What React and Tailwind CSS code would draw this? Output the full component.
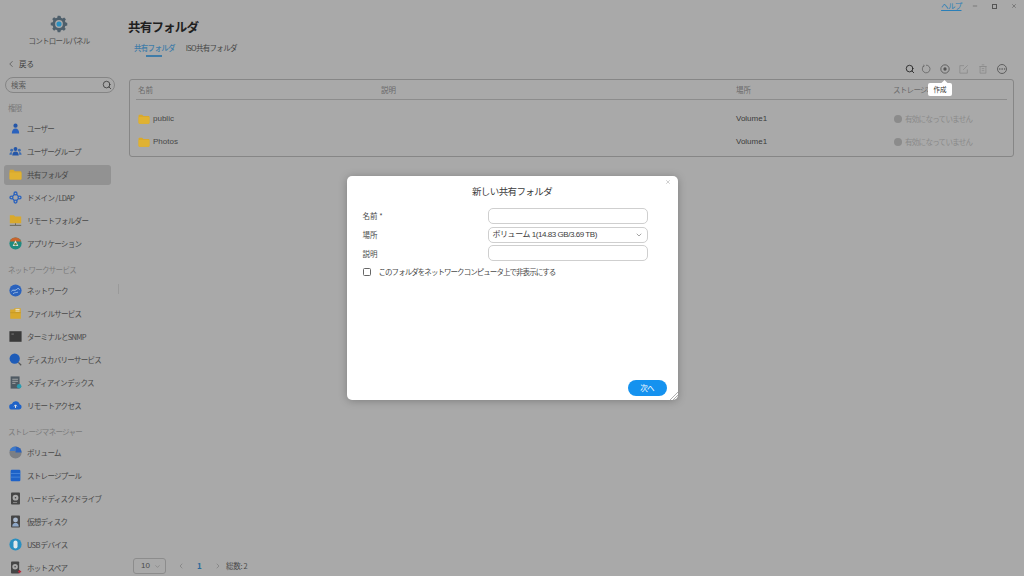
import React from "react";
import { Search, ChevronLeft, ChevronDown, ChevronRight, X, Minus, Ellipsis } from "lucide-react";

const Folder = ({ c = "#d9a92c", className = "" }) => (
  <svg viewBox="0 0 22 18" className={className}>
    <path d="M1 2.5A1.5 1.5 0 0 1 2.5 1h5L10 3.5h9.5A1.5 1.5 0 0 1 21 5V16a1.5 1.5 0 0 1-1.5 1.5h-17A1.5 1.5 0 0 1 1 16z" fill={c} />
    <path d="M1 5.5h20V16a1.5 1.5 0 0 1-1.5 1.5h-17A1.5 1.5 0 0 1 1 16z" fill="#e0b232" />
  </svg>
);

const S = ({ children }) => <svg viewBox="0 0 16 16" className="w-[13px] h-[13px]">{children}</svg>;

const icons = {
  user: <S><circle cx="8" cy="4.5" r="2.6" fill="#2456a8" /><path d="M3.5 14c0-4 1.8-6 4.5-6s4.5 2 4.5 6z" fill="#2a62bd" /></S>,
  group: <S><circle cx="8" cy="5" r="2.4" fill="#2456a8" /><circle cx="3.3" cy="6.5" r="1.8" fill="#3d6cb0" /><circle cx="12.7" cy="6.5" r="1.8" fill="#3d6cb0" /><path d="M4 13c0-3 1.5-5 4-5s4 2 4 5z" fill="#2456a8" /><path d="M0.5 12c0-2 1-3.5 3-3.5v3.5zM15.5 12c0-2-1-3.5-3-3.5v3.5z" fill="#3d6cb0" /></S>,
  domain: <S><g fill="none" stroke="#2a62bd" strokeWidth="1.6"><circle cx="8" cy="3" r="1.8" /><circle cx="8" cy="13" r="1.8" /><circle cx="3" cy="8" r="1.8" /><circle cx="13" cy="8" r="1.8" /><path d="M6.6 4.4 4.4 6.6M9.4 4.4l2.2 2.2M6.6 11.6 4.4 9.4M9.4 11.6l2.2-2.2" /></g></S>,
  remote: <S><path d="M1 1.5h5l1.5 1.5H15v8.5H1z" fill="#d9a92c" /><path d="M8 11.5v2M1 14h14" stroke="#5e5a48" strokeWidth="1" /></S>,
  app: <S><circle cx="8" cy="8" r="7.5" fill="#1f8a80" /><path d="M8 .5A7.5 7.5 0 0 1 15 5.5H1A7.5 7.5 0 0 1 8 .5z" fill="#c8642c" /><path d="M8 4 4.5 11h7z" fill="#ddd" /><circle cx="8" cy="9" r="1.5" fill="#5a8a3c" /></S>,
  network: <S><circle cx="8" cy="8" r="7.5" fill="#2a62bd" /><path d="M3 9c2-3 4 0 6-2s3-2 4 0" stroke="#a8c4e8" strokeWidth="1.2" fill="none" /><path d="M5 12c2-2 4-1 6-2" stroke="#a8c4e8" strokeWidth="1" fill="none" /></S>,
  file: <S><path d="M1.5 3h4L7 1.5h7.5v13h-13z" fill="#d9a92c" /><path d="M8 3h5M8 5h5" stroke="#eee" strokeWidth="1" /><path d="M1.5 7h13" stroke="#c39522" strokeWidth="1" /></S>,
  terminal: <S><rect x="0.5" y="1.5" width="15" height="13" fill="#3a3a3a" /><path d="M3 5h3" stroke="#888" strokeWidth="1" /></S>,
  discovery: <S><circle cx="7" cy="7" r="6.3" fill="#1e5cb8" /><path d="m11.5 11.5 3.5 3.5" stroke="#555" strokeWidth="1.6" /></S>,
  media: <S><rect x="2" y="0.5" width="11" height="15" fill="#4f5a63" /><path d="M4 4h7M4 6.5h7M4 9h4" stroke="#b5b5b5" strokeWidth="1" /><circle cx="12.5" cy="12.5" r="2.8" fill="#2a9bb0" /></S>,
  access: <S><path d="M4 13a3.5 3.5 0 0 1-.5-7A5 5 0 0 1 13 6.5 3.3 3.3 0 0 1 12.5 13z" fill="#1e62c8" /><path d="M8 11V7.5M6.3 9 8 7.2 9.7 9" stroke="#e8e8e8" strokeWidth="1.2" fill="none" /></S>,
  volume: <S><circle cx="8" cy="8" r="7.5" fill="#7c7f84" /><path d="M8 8V.5A7.5 7.5 0 0 1 15.5 8z" fill="#2a62bd" /><path d="M8 .5A7.5 7.5 0 0 0 .9 6H8z" fill="#3a78cc" /></S>,
  pool: <S><rect x="2" y="1" width="12" height="14" rx="1.5" fill="#1e62c8" /><path d="M2 5.5h12M2 10h12" stroke="#5a94e0" strokeWidth="0.8" /></S>,
  hdd: <S><rect x="2.5" y="0.5" width="11" height="15" rx="1" fill="#454545" /><circle cx="8" cy="7" r="3.6" fill="#a9a9a9" /><circle cx="8" cy="7" r="1" fill="#454545" /><path d="M5 13h5" stroke="#999" strokeWidth="1" /></S>,
  vdisk: <S><rect x="2.5" y="0.5" width="11" height="15" rx="1" fill="#454545" /><circle cx="8" cy="6" r="3" fill="#a9b8cc" /><path d="M4 14c0-3 2-4.5 4-4.5s4 1.5 4 4.5z" fill="#8fa8c8" /></S>,
  usb: <S><circle cx="8" cy="8" r="7.5" fill="#2a8fc0" /><rect x="5.5" y="3" width="5" height="10" rx="2.5" fill="#dfe8ec" /></S>,
  spare: <S><rect x="2.5" y="0.5" width="10" height="15" rx="1" fill="#454545" /><circle cx="7.5" cy="7" r="3.4" fill="#a9a9a9" /><circle cx="7.5" cy="7" r="1" fill="#454545" /><path d="M11 13h4M13 11v4" stroke="#b02a3a" strokeWidth="1.6" /></S>,
};

const sections = [
  { title: "権限", items: [["user", "ユーザー"], ["group", "ユーザーグループ"], ["folder", "共有フォルダ", true], ["domain", "ドメイン / LDAP"], ["remote", "リモートフォルダー"], ["app", "アプリケーション"]] },
  { title: "ネットワークサービス", items: [["network", "ネットワーク"], ["file", "ファイルサービス"], ["terminal", "ターミナルとSNMP"], ["discovery", "ディスカバリーサービス"], ["media", "メディアインデックス"], ["access", "リモートアクセス"]] },
  { title: "ストレージマネージャー", items: [["volume", "ボリューム"], ["pool", "ストレージプール"], ["hdd", "ハードディスクドライブ"], ["vdisk", "仮想ディスク"], ["usb", "USB デバイス"], ["spare", "ホットスペア"]] },
];

function Sidebar() {
  return (
    <aside className="w-[120px] shrink-0 flex flex-col">
      <div className="flex flex-col items-center pt-[15px] pr-[2px] h-[57px] shrink-0">
        <svg viewBox="0 0 24 24" className="w-[18px] h-[18px]">
          <path d="M12 1l2 .2.7 2.6 1.9.8 2.3-1.4 2.3 2.4-1.3 2.3.8 1.9 2.3.7v3.4l-2.6.7-.8 1.9 1.4 2.3-2.4 2.3-2.3-1.3-1.9.8-.7 2.3h-3.4l-.7-2.6-1.9-.8-2.3 1.4-2.3-2.4 1.3-2.3-.8-1.9L1 13.7v-3.4l2.6-.7.8-1.9L3 5.4l2.4-2.3 2.3 1.3 1.9-.8.7-2.6z" fill="#4e5f6b" />
          <circle cx="12" cy="12" r="5.2" fill="#a9a9a9" />
          <circle cx="12" cy="12" r="3.4" fill="#2a8fc0" />
        </svg>
        <div className="text-[7.5px] leading-[10px] mt-[3px] text-[#4e4e4e] whitespace-nowrap">コントロールパネル</div>
      </div>
      <div className="flex items-center h-[14px] shrink-0 pl-[6px] text-[7.5px] tracking-normal text-[#404040]">
        <ChevronLeft className="w-[10px] h-[10px] mr-[3px]" strokeWidth={1.5} />戻る
      </div>
      <div className="ml-[5px] mt-[6px] w-[110px] h-[16px] shrink-0 rounded-full border border-[#858585] flex items-center justify-between pl-[5px] pr-[2px] text-[7.5px] tracking-normal text-[#5a5a5a]">
        検索
        <Search className="w-[10px] h-[10px] text-[#2e2e2e]" strokeWidth={1.8} />
      </div>
      {sections.map((s) => (
        <div key={s.title} className="mt-[6px] shrink-0">
          <div className="h-[18px] flex items-center pl-[8px] text-[7.5px] text-[#7a7a7a] whitespace-nowrap">{s.title}</div>
          {s.items.map(([ic, label, active]) => (
            <div key={label} className={`flex items-center ml-[4px] w-[107px] pl-[5px] rounded-[3px] text-[7.5px] text-[#484848] whitespace-nowrap ${active ? "bg-[#929292] h-[20px] my-[1.5px]" : "h-[23px]"}`}>
              <span className="w-[17px] flex justify-start shrink-0 mr-[1px]">
                {ic === "folder" ? <Folder className="w-[13px] h-[11px]" /> : icons[ic]}
              </span>
              {label}
            </div>
          ))}
        </div>
      ))}
    </aside>
  );
}

function Row({ name }) {
  return (
    <div className="h-[23px] flex items-center text-[7.5px] text-[#3c3c3c]">
      <div className="w-[245px] flex items-center pl-[2px]">
        <Folder className="w-[12px] h-[10px] mr-[3px]" />
        <span className="font-['Liberation_Sans',sans-serif] text-[8px] tracking-normal text-[#474747]">{name}</span>
      </div>
      <div className="w-[355px]" />
      <div className="w-[157px] font-['Liberation_Sans',sans-serif] text-[8px] tracking-normal">Volume1</div>
      <div className="flex items-center text-[#8a8a8a] pl-[1px]">
        <span className="w-[8px] h-[8px] rounded-full bg-[#8b8b8b] mr-[3px]" />
        有効になっていません
      </div>
    </div>
  );
}

function Main() {
  return (
    <main className="flex-1 flex flex-col pl-[9px] pr-[10px] relative min-w-0">
      <div className="flex justify-end items-center h-[12px] text-[#4a4a4a] -mr-[3px]">
        <span className="text-[7.5px] text-[#2a7fb8] underline mr-[10px]">ヘルプ</span>
        <Minus className="w-[6px] h-[6px] mr-[14px]" />
        <span className="w-[5px] h-[5px] border border-[#555] mr-[14.5px]" />
        <X className="w-[6px] h-[6px]" />
      </div>
      <h1 className="text-[12.5px] leading-[16px] font-bold tracking-[-0.8px] text-[#1f1f1f] mt-[7px] -ml-[1px]">共有フォルダ</h1>
      <div className="flex text-[7.5px] mt-[6px] h-[20px] pl-[5px]">
        <div className="relative text-[#3f7ca8] font-medium leading-[13px]">
          共有フォルダ
          <span className="absolute left-[12px] top-[14px] w-[16px] h-[1.5px] bg-[#3f7ca8]" />
        </div>
        <div className="ml-[11px] text-[#454545] leading-[13px]">ISO共有フォルダ</div>
      </div>
      <div className="flex justify-end items-center h-[14px] gap-[9px] pr-[7px] mt-[1px] mb-[3px] text-[#5f5f5f]">
        <Search className="w-[10px] h-[10px] text-[#1d1d1d] -mr-[3px]" strokeWidth={2} />
        <svg viewBox="0 0 12 12" className="w-[10px] h-[10px]"><path d="M3.6 2.2A4.6 4.6 0 1 0 6 1.4" fill="none" stroke="#5f5f5f" strokeWidth="0.9" /><path d="M3.2 .8 3.8 2.6 2 3" fill="none" stroke="#5f5f5f" strokeWidth="0.8" /></svg>
        <svg viewBox="0 0 12 12" className="w-[10px] h-[10px]"><circle cx="6" cy="6" r="5" fill="none" stroke="#555" /><circle cx="6" cy="6" r="2" fill="#555" /></svg>
        <svg viewBox="0 0 12 12" className="w-[10px] h-[10px]"><path d="M10 6.5V11H1V2h5" fill="none" stroke="#8c8c8c" /><path d="m5 7 5.5-5.5" stroke="#8c8c8c" /></svg>
        <svg viewBox="0 0 12 12" className="w-[10px] h-[10px]"><path d="M2.5 3h7v8h-7zM1.5 3h9M4.5 1h3" fill="none" stroke="#8c8c8c" /><path d="M4.5 5.5h3M4.5 8h3" stroke="#8c8c8c" /></svg>
        <Ellipsis className="w-[10px] h-[10px] border border-[#5f5f5f] rounded-full" strokeWidth={2} />
      </div>
      <div className="h-[78px] border border-[#868686] rounded-[3px] px-[6px]">
        <div className="h-[20px] flex items-center text-[7.5px] text-[#6a6a6a] border-b border-[#8c8c8c]">
          <div className="w-[245px] pl-[2px] tracking-normal">名前</div>
          <div className="w-[355px] tracking-normal">説明</div>
          <div className="w-[157px] tracking-normal">場所</div>
          <div>ストレージ状態</div>
        </div>
        <div className="pt-[7px]">
          <Row name="public" />
          <Row name="Photos" />
        </div>
      </div>
      <div className="flex-1" />
      <div className="h-[20px] flex items-center text-[7.5px] text-[#4a4a4a] pl-[4px]">
        <div className="w-[33px] h-[16px] border border-[#8c8c8c] rounded-[3px] flex items-center justify-between pl-[7px] pr-[4px]">
          <span className="font-['Liberation_Sans',sans-serif] text-[8px] tracking-normal">10</span>
          <ChevronDown className="w-[7px] h-[7px] text-[#7a7a7a]" />
        </div>
        <ChevronLeft className="w-[8px] h-[8px] ml-[11px] text-[#7a7a7a]" />
        <span className="ml-[12px] font-bold text-[#2a6a9a] text-[8px]">1</span>
        <ChevronRight className="w-[8px] h-[8px] ml-[13px] text-[#7a7a7a]" />
        <span className="ml-[4px] tracking-[-0.3px]">総数:&nbsp;2</span>
      </div>
    </main>
  );
}

function Dialog() {
  return (
    <div className="absolute inset-0 flex items-center justify-center">
      <div className="relative w-[331px] h-[224px] bg-white rounded-[5px] flex flex-col px-[16px] shadow-[0_1px_8px_rgba(0,0,0,0.25)] text-[7.5px] text-[#4a4a4a]">
        <X className="absolute right-[7px] top-[3px] w-[6px] h-[6px] text-[#a0a0a0]" />
        <div className="text-center text-[9.5px] tracking-[-0.6px] leading-[14px] mt-[8px] mb-[8.5px] text-[#3c3c3c]">新しい共有フォルダ</div>
        <div className="flex items-center h-[18.7px]">
          <div className="w-[125px] tracking-normal">名前&nbsp;*</div>
          <div className="w-[160px] h-[16px] border border-[#cfcfcf] rounded-[5px]" />
        </div>
        <div className="flex items-center h-[18.7px]">
          <div className="w-[125px] tracking-normal">場所</div>
          <div className="w-[160px] h-[16px] border border-[#cfcfcf] rounded-[5px] flex items-center justify-between pl-[4px] pr-[4px] text-[#3c3c3c]">
            <span className="font-['Liberation_Sans','Noto_Sans_CJK_JP',sans-serif] text-[8px] tracking-[-0.45px] font-normal">ボリューム 1(14.83 GB/3.69 TB)</span>
            <ChevronDown className="w-[8px] h-[8px] text-[#777]" />
          </div>
        </div>
        <div className="flex items-center h-[18.7px]">
          <div className="w-[125px] tracking-normal">説明</div>
          <div className="w-[160px] h-[16px] border border-[#cfcfcf] rounded-[5px]" />
        </div>
        <div className="flex items-center h-[18.7px]">
          <span className="w-[8px] h-[8px] border border-[#666] rounded-[1.5px] mr-[8px]" />
          <span className="tracking-[-0.95px]">このフォルダをネットワークコンピュータ上で非表示にする</span>
        </div>
        <div className="flex-1" />
        <div className="flex justify-end mb-[4px]">
          <div className="w-[39px] h-[16px] mr-[-5px] rounded-full bg-[#1592ef] text-white flex items-center justify-center">次へ</div>
        </div>
        <svg viewBox="0 0 8 8" className="absolute right-0 bottom-0 w-[8px] h-[8px]">
          <path d="M8 0 0 8M8 3 3 8M8 6 6 8" stroke="#9a9a9a" strokeWidth="0.8" />
        </svg>
      </div>
    </div>
  );
}

export default function App() {
  return (
    <div className="relative w-[1024px] h-[576px] overflow-hidden flex bg-[#a9a9a9] tracking-[-0.7px] font-['Noto_Sans_CJK_JP','Liberation_Sans',sans-serif]">
      <Sidebar />
      <Main />
      <span className="absolute left-[118px] top-[284px] w-[1px] h-[10px] bg-[#9a9a9a]" />
      <Dialog />
      <div className="absolute left-[928px] top-[83px] w-[24px] h-[13px] bg-white rounded-[2px] flex items-center justify-center text-[6.5px] text-[#333] tracking-normal">
        作成
        <span className="absolute left-[14px] top-[-2px] w-[5px] h-[5px] bg-white rotate-45" />
      </div>
    </div>
  );
}
